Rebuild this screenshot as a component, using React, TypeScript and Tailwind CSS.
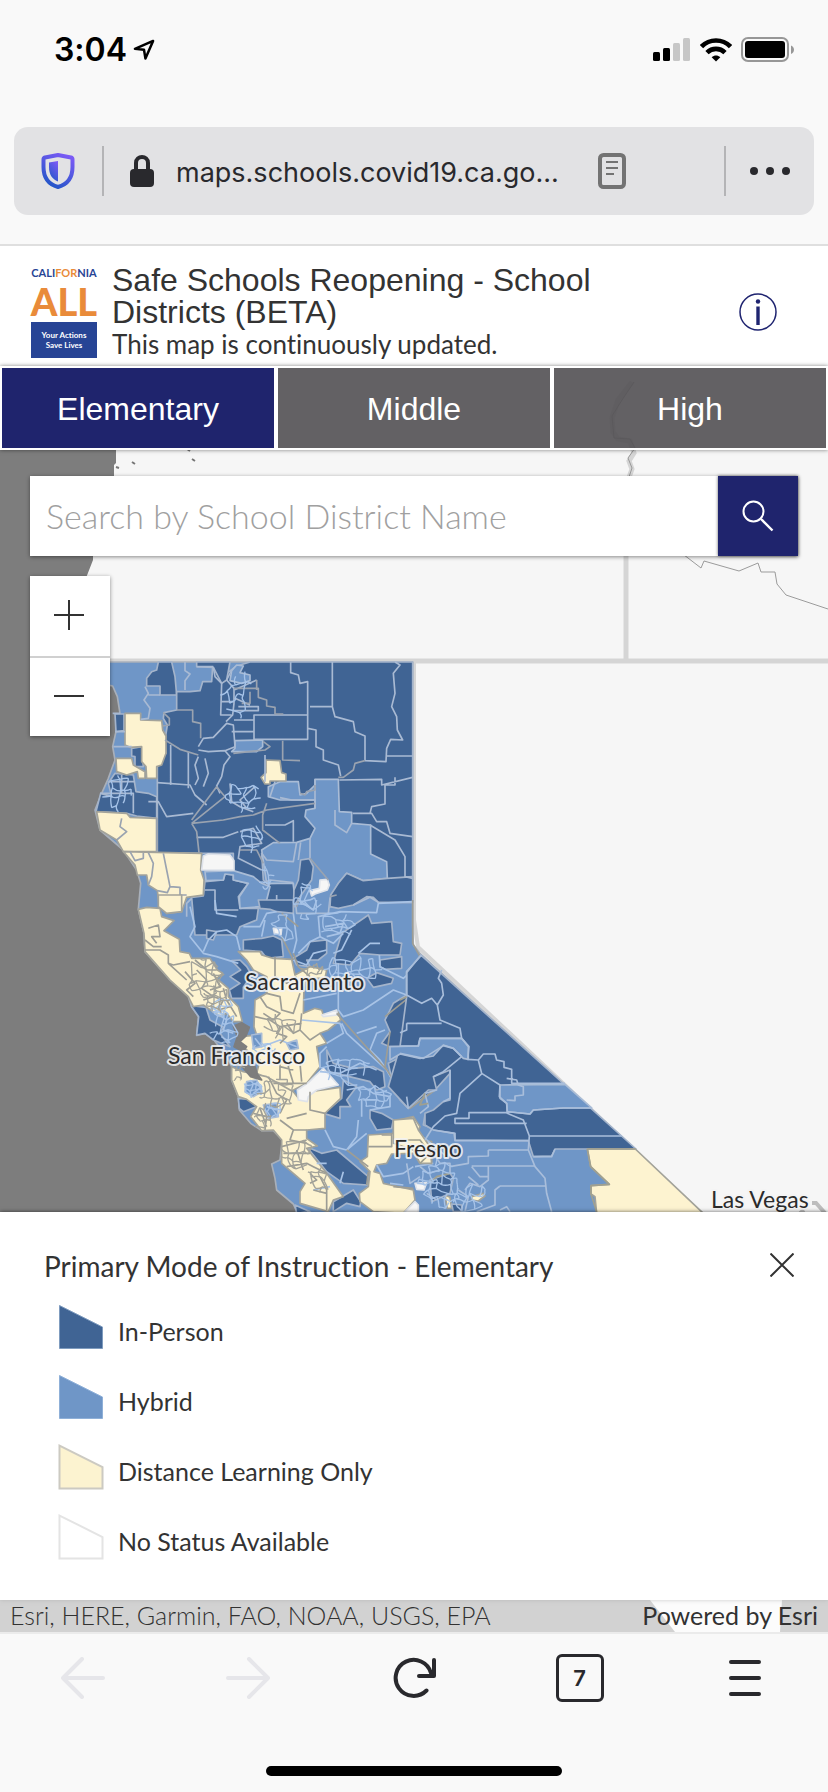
import { useState } from "react";
import type { ReactNode } from "react";

const DARK = "#406494";
const MID = "#6f96c7";
const PALE = "#fdf3d0";
const BLANK = "#f6f6f6";
const WATER = "#7d7d7d";

type Region = { fill: string; points: string[] };

/* District areas. Map units are a third of a pixel, origin at (80, 650). */
const north: Region[] = [
  {
    fill: DARK,
    points: [
      "235,36 275,36 285,80 290,135 240,135 240,108 200,108 200,85 215,65 230,60",
      "290,125 330,125 360,122 368,95 395,95 398,50 420,60 440,70 470,48 510,36 998,36 998,757 895,757 880,742 860,740 820,765 750,770 755,740 780,700 660,630 545,610 550,690 570,710 540,770 480,775 470,670 460,660 460,610 365,610 232,608 232,345 258,310 255,270 262,225 250,205 252,188 290,180",
      "350,36 450,36 440,90 425,100 400,52 350,50",
      "105,192 132,192 132,242 108,245",
      "155,295 185,290 190,350 165,350 165,320 155,318",
      "105,370 160,375 168,425 205,430 230,440 230,505 170,498 140,490 48,485 62,430 95,440 85,400",
      "335,742 370,738 375,695 430,690 435,672 460,675 460,690 505,700 475,740 480,775 535,775 530,810 480,830 470,855 345,855",
      "570,700 640,698 645,770 540,775 545,750",
    ],
  },
  {
    fill: MID,
    points: [
      "455,62 470,45 490,48 480,68 510,75 510,92 485,100 450,92",
      "465,272 548,270 548,290 530,305 455,305 465,295",
      "565,410 600,395 655,395 660,435 680,430 705,405 705,388 775,388 778,485 815,487 815,520 872,525 872,612 920,635 922,685 850,692 800,670 775,700 750,745 745,790 650,790 640,700 560,700 545,600 580,578 650,577 690,565 705,535 675,500 678,480 705,475 705,450 600,450 565,440",
      "375,665 460,662 520,680 545,700 570,710 560,750 540,770 480,775 478,740 505,700 460,690 460,675 435,672 430,690 378,692",
    ],
  },
  {
    fill: DARK,
    points: [
      "662,630 688,626 700,650 695,690 660,740 640,770 642,720 655,690",
      "775,700 800,670 850,692 922,685 998,680 998,757 895,757 880,742 860,740 820,765 775,775 750,770 752,735",
    ],
  },
  {
    fill: PALE,
    points: [
      "135,190 182,190 182,210 245,212 248,240 258,258 258,310 245,345 230,350 230,385 200,385 198,350 185,335 185,290 150,292 135,285",
      "108,325 155,325 160,345 195,365 195,385 175,385 172,365 140,375 110,365",
      "50,485 140,490 150,502 230,505 230,605 130,605 110,570 60,540",
      "130,605 365,610 362,660 372,690 370,735 320,742 305,785 260,790 238,770 232,722 205,705 200,675 172,675 165,645",
      "558,330 600,332 605,368 618,372 618,393 570,393 570,402 555,402 543,382 558,368",
    ],
  },
  {
    fill: BLANK,
    points: [
      "370,618 385,612 450,615 462,632 462,660 365,660",
      "720,690 742,688 748,705 742,720 705,732 695,738 690,722 718,715",
    ],
  },
];

/* Second sheet, origin at (80, 900). */
const central: Region[] = [
  {
    fill: DARK,
    points: [
      "535,0 640,0 640,40 590,35 570,28 540,25",
      "490,120 545,115 580,108 605,120 610,170 560,175 545,155 490,150",
      "455,182 480,180 500,200 515,225 490,262 490,295 455,295 448,270 480,250 450,230 482,210",
      "330,292 342,318 378,322 390,360 430,382 420,400 450,440 400,420 375,400 350,405 356,350 335,320",
      "380,90 410,95 400,120 380,115",
      "680,150 690,125 740,120 740,160 715,180 680,180 690,200 650,195 640,175",
      "785,100 865,45 875,70 935,65 940,125 965,130 960,165 900,165 840,160 810,195 760,190 770,150",
      "900,180 965,170 965,205 915,208 900,200",
      "860,235 890,218 940,235 935,250 880,262",
      "980,215 1025,168 1115,250 1400,520 1145,475 1145,415 1015,415 1010,440 930,440 905,430 930,395 915,360 940,310 980,285",
      "925,490 980,462 1035,478 1090,438 1150,475 1110,520 1065,570 985,625 960,600 940,560",
      "740,450 760,490 820,505 880,500 910,515 915,560 890,570 870,545 830,535 745,515",
      "790,540 830,560 800,600 812,620 780,620 780,655 730,640 785,595",
      "870,630 905,640 940,660 935,685 890,690 870,655",
      "1035,645 1060,640 1110,605 1110,690 1070,690 1030,675",
      "475,595 525,600 530,620 490,635 478,625",
      "680,740 725,760 770,750 865,830 862,855 790,850 740,815 720,790",
      "760,905 820,870 842,905 840,920 800,910 760,935",
      "645,915 690,935 650,940",
    ],
  },
  {
    fill: PALE,
    points: [
      "175,28 200,22 240,25 245,50 282,62 252,92 298,118 300,155 328,160 335,175 390,175 412,210 428,220 410,235 445,265 445,290 475,320 487,365 460,365 440,340 420,350 370,315 340,320 325,290 270,240 195,155 192,100",
      "235,-15 305,-15 305,35 260,40 235,20",
      "475,155 540,155 545,165 580,175 635,178 645,225 690,200 740,210 735,235 680,235 672,262 670,340 705,325 725,330 730,345 775,335 782,360 745,390 720,400 740,430 710,440 720,500 680,550 630,575 600,560 560,535 530,520 540,480 500,450 480,430 480,410 530,405 522,380 525,300 560,280 560,230 520,210 500,180",
      "455,500 490,515 560,530 640,575 660,600 690,575 780,562 782,595 735,640 735,685 680,690 680,715 712,738 680,745 740,820 790,890 760,900 745,935 660,910 660,875 675,850 640,820 605,790 605,720 580,690 545,692 512,650 530,620 500,598 475,590 455,540",
      "955,660 1000,650 1020,680 1005,715 1055,725 1055,790 1020,790 1000,760 935,762 920,790 890,795 882,815 900,820 910,850 1000,870 1005,900 970,940 880,935 840,905 838,880 865,860 870,815 840,785 862,770 865,705 940,700 945,670",
    ],
  },
  {
    fill: BLANK,
    points: [
      "705,528 730,505 775,555 710,570 685,590 682,605 655,600 652,570 685,548",
      "580,85 605,85 603,105 583,100",
      "725,345 770,330 772,345 730,350",
      "1005,850 1040,848 1032,870 1010,868",
      "970,940 1005,905 1015,915 1015,940",
    ],
  },
  {
    fill: MID,
    points: [
      "500,545 530,540 545,575 520,590 495,575",
      "550,615 590,610 595,650 565,655",
      "515,405 545,400 545,440 520,445",
      "620,430 650,420 655,445 630,450",
    ],
  },
  {
    fill: WATER,
    points: [
      "460,378 485,368 508,382 498,408 480,425 500,440 490,455 462,440 472,410",
      "482,495 525,500 532,522 545,540 512,530",
    ],
  },
];

/* Eastern sheet, origin at (400, 900). */
const east: Region[] = [
  {
    fill: DARK,
    points: [
      "20,218 62,165 708,747 465,747 455,768 400,770 385,722 165,720 162,700 100,690 75,675 75,640 100,630 130,605 150,600 150,510 100,530 110,570 85,570 25,625 -35,560 0,440 20,290",
    ],
  },
  {
    fill: MID,
    points: [
      "-30,440 55,438 60,415 185,415 205,440 205,478 190,475 160,445 130,435 100,468 60,475 0,462 -30,480",
      "300,555 495,553 575,624 490,624 400,630 390,642 322,635 320,610 300,595",
    ],
  },
  {
    fill: PALE,
    points: [
      "562,747 706,747 910,940 590,940 585,890 573,882 573,857 628,853 572,800",
      "215,890 250,880 255,888 235,903 215,900",
      "135,885 150,892 155,925 142,925",
      "-20,660 40,655 55,690 90,740 95,790 60,790 40,750 -20,730",
    ],
  },
  {
    fill: DARK,
    points: ["90,840 150,820 160,835 150,880 95,905", "155,912 185,915 185,935 160,935"],
  },
];

type Stroke = { color: string; d: string };

const northLines: Stroke[] = [
  {
    color: "#a9bad3",
    d: "M315 36V62L330 72L315 92V120M350 50H400M400 52L405 80L425 100L422 195H455M455 60L440 90L462 115V160L458 195L438 215M422 155H460M462 120L530 90M465 145L510 165M462 182H535V170H475M462 210H520M455 245H522M522 270V195H683M632 36V68L655 75L660 100L683 95V268H522M757 36V170H690M757 100V170L765 200L820 215L825 245L855 258V330M945 36L960 45L940 70L945 130L935 170L950 200L952 240L968 270L932 268L920 295L918 335L855 332M683 235L708 240V290L730 300V330L775 345L782 378M920 318H998M272 285V405M325 305V415M355 320L345 345L355 385L345 405M375 325L385 370L370 410M232 398L330 405L345 435L380 465M205 455L235 455L260 500L340 490M355 290L370 265L400 262L440 220L460 225L465 290L435 302L385 305L355 300M435 302L450 320L432 345L425 380L410 408L420 430M450 400L455 455L480 470L520 485M525 410L480 450L500 475M555 315V395M350 562H430L475 545M555 525L615 525L640 512V575M705 450H635L600 443M705 388V475M778 390L905 388V405L998 382M945 382V405H915V462L875 470L870 490M870 525L945 570L975 620V680L998 685M818 490H875L890 515L920 515L930 550L998 560M765 480V525L800 548L815 520M545 610L560 630L640 635L650 577M690 565L690 625M655 630L662 577M590 735V770L640 775M480 545L520 535L545 580L480 590L475 625L545 660M550 700L570 690L640 698M375 720H405V780H475M335 745L320 760V800M60 430H160V490M85 395H165M125 375V430M100 290H155M105 245H135M120 190H98M195 110L205 130L192 150L210 175L205 205L182 208M240 135H205M585 395L570 440M820 765L870 742L895 757",
  },
  {
    color: "#9aa3b0",
    d: "M290 180H338V215L362 220V265M250 188L268 205V225L248 228M255 270L300 298L355 315M462 115H535V142L560 150V168L585 172V192H610M530 90V120M510 125V160H485M460 310L555 300L570 290L550 275M608 272V330L660 332M335 520L435 440L410 410L335 510M335 520L430 510L480 500L520 495L560 480L705 460M335 520L350 545L357 608M775 382H790L820 360L825 340L855 332M705 405V420L680 425L675 435L660 430M560 460L548 495V540L600 580M480 600L530 600L550 640M690 625L745 690M150 605L165 632L190 625V608M205 608L220 640L215 680L205 705M250 610L260 660L270 710L300 712V735H320M232 722L262 728L270 710M125 505L120 530L140 545L110 570M660 740L650 770M750 740L770 735M230 605V505",
  },
];

const centralLines: Stroke[] = [
  {
    color: "#a8c3e6",
    d: "M330 20L345 80L330 110L370 160L410 170L475 190M405 0L410 40L470 50M370 155L385 120L410 95L440 90L470 110L480 150M490 80H540L560 40L590 35M545 110L555 60M640 40L650 120L640 160M655 160L690 125L720 110L715 50L780 35L890 38L895 10L998 5M735 80L790 70L780 100L740 110M720 110L760 130L790 100M815 90L785 150L760 160M835 160L870 130L900 130M898 165L900 200L970 235L1010 200M775 190V330L790 350L850 330L940 270L980 285M670 300L770 280M665 360L780 370L790 400L740 430M785 370L800 400L920 510L900 480L870 450L890 400L915 390M830 400L890 380M920 510L985 625M720 515L780 520L840 490L890 510M800 570L850 560L880 580L930 590L930 620L870 630M850 600L890 600M835 660L830 710L800 750M735 690L760 740L800 750L860 700M890 795L910 830L970 820L1000 800M930 850L970 855M710 790L740 790M790 815L780 850M700 870L750 860M525 415L545 440L600 420L650 440M410 340L440 360L430 390L460 400M520 550L545 560L520 580M560 620L590 630M720 505V460L740 440M655 0L700 30L710 0M640 180L680 195L700 160L740 150M1000 690L1040 720L1100 770M1005 800L1060 790M845 650V600",
  },
  {
    color: "#9d9d95",
    d: "M195 150H240L265 165V190L280 195L330 185M195 120L220 140L245 140M205 85L235 75L240 110L215 110L230 130M265 190L320 240M315 215L345 250L320 270L340 290M350 210L380 240L365 265L400 290L370 300M345 180L380 210L410 210M400 220L420 260L390 270M430 265L440 300L470 350M400 290L430 300L415 330L450 320M560 230V280L600 290L605 330L640 340L660 280M585 170V230L620 250L650 230M540 290L560 320L600 340L580 360L550 340M525 350L570 360L600 380L665 370M600 380L590 400L620 410L600 430M665 340L660 390L690 420L720 400M620 370L640 400L660 390M560 450L600 460V540M640 460L625 500L640 550M600 500L640 510M660 490L665 545M580 550H680M565 530L590 580L620 600L600 640M690 575L690 630L735 640M620 655L680 640M600 660L640 690L680 690M640 690L630 720L680 730M605 740L680 720M610 760L690 760M620 800L680 790L700 800L740 820M650 750L670 810M690 820L710 840L690 850M720 830L740 870L740 930M700 870L740 880M540 625L560 680M520 640L560 650L555 690M935 700V740H865M905 705H935M940 860L1000 865M860 855L865 815M800 750L865 800M915 350L990 290M930 395L915 500L990 625L1065 570M770 340L920 510M640 160L655 200L690 230M655 80L605 40M605 110L640 180M998 0V130L1020 170",
  },
];

const eastLines: Stroke[] = [
  {
    color: "#a9bedb",
    d: "M65 165L20 215V285L65 310L95 295L112 315L130 285L125 250L115 235L125 210M112 315L120 360L180 385L185 415L207 440L203 478L235 480L245 520L300 555L298 590L320 610L322 640L370 660L388 708L385 750L405 800L435 835L440 880L455 935M235 480L250 462H285L290 480L312 485V502L335 508L335 550H495M320 535L350 540L355 555L370 560V585L345 588V602L320 600M322 635L390 642L400 630L490 624H575M388 708H665M385 722H165V700L100 690M320 638H207V655H165V670H380M75 720L100 680L135 648L170 640L180 580L245 522M185 470L130 515L100 530M150 510V595L130 605M20 370H125M0 398L20 390V370M0 438H55L60 415H185M0 460L70 475L130 437L160 445L185 470M215 798H405M400 770H455L465 747M265 750H385M265 750V768L205 770V790L150 800M300 858H440M300 858L285 870V915L230 935M215 800L240 830L265 830M265 800V840L240 860L210 850L195 870M100 760L120 790L150 790V820M60 800L85 820L120 810M20 790L30 850L60 830M205 830L235 855M80 880L110 900M175 870L205 890L195 935M300 930L320 920L330 935M60 640L85 620L75 580L110 570M20 590L25 625",
  },
  {
    color: "#a0a08f",
    d: "M562 747H706M562 747L572 800L628 853L573 857V882L590 935M0 300L20 290M75 580L60 615L85 610M0 720H60L90 760L60 790M90 850L110 830L150 820",
  },
];

/* A field of small irregular cells for the crowded metropolitan areas. */
function cells(cx: number, cy: number, rx: number, ry: number, step: number, seed: number) {
  let s = seed;
  const rnd = () => {
    s = (s * 16807) % 2147483647;
    return s / 2147483647;
  };
  const cols = Math.ceil((rx * 2) / step);
  const rows = Math.ceil((ry * 2) / step);
  const grid: number[][][] = [];
  for (let r = 0; r <= rows; r++) {
    grid.push([]);
    for (let c = 0; c <= cols; c++) {
      grid[r].push([
        Math.round(cx - rx + c * step + (rnd() - 0.5) * step * 0.9),
        Math.round(cy - ry + r * step + (rnd() - 0.5) * step * 0.9),
      ]);
    }
  }
  const inside = (p: number[]) => ((p[0] - cx) / rx) ** 2 + ((p[1] - cy) / ry) ** 2 < 1;
  let d = "";
  const link = (a: number[], b: number[]) => {
    if (!inside(a) || !inside(b) || rnd() < 0.15) return;
    const mx = Math.round((a[0] + b[0]) / 2 + (rnd() - 0.5) * step * 0.6);
    const my = Math.round((a[1] + b[1]) / 2 + (rnd() - 0.5) * step * 0.6);
    d += `M${a[0]} ${a[1]}Q${mx} ${my} ${b[0]} ${b[1]}`;
  };
  for (let r = 0; r <= rows; r++) {
    for (let c = 0; c <= cols; c++) {
      if (c < cols) link(grid[r][c], grid[r][c + 1]);
      if (r < rows) link(grid[r][c], grid[r + 1][c]);
    }
  }
  return d;
}

const lightCells = [
  cells(490, 440, 55, 50, 21, 11),
  cells(515, 570, 45, 45, 22, 23),
  cells(470, 130, 50, 80, 26, 5),
  cells(115, 430, 50, 60, 24, 31),
  cells(555, 685, 30, 40, 18, 8),
  cells(680, 755, 45, 60, 24, 91),
  cells(770, 825, 60, 40, 22, 17),
  cells(820, 955, 90, 45, 22, 71),
  cells(430, 1130, 45, 65, 20, 43),
  cells(800, 1260, 80, 50, 22, 39),
  cells(890, 1335, 70, 45, 22, 55),
  cells(520, 1315, 35, 30, 16, 77),
  cells(580, 1380, 30, 30, 16, 19),
  cells(545, 1190, 45, 25, 18, 37),
  cells(1080, 1600, 70, 80, 21, 29),
  cells(1170, 1640, 60, 50, 22, 83),
  cells(610, 840, 40, 50, 24, 67),
  cells(425, 1070, 35, 30, 16, 3),
];
const greyCells = [
  cells(370, 990, 65, 70, 24, 13),
  cells(410, 1045, 45, 45, 18, 59),
  cells(590, 1330, 60, 50, 21, 47),
  cells(550, 1400, 35, 42, 19, 7),
  cells(650, 1510, 50, 55, 24, 61),
  cells(600, 1130, 55, 40, 24, 21),
  cells(700, 960, 40, 22, 17, 73),
  cells(480, 1270, 25, 35, 15, 97),
  cells(715, 1590, 40, 45, 22, 99),
];

const edges: Record<string, string> = {
  [DARK]: "#a4b4cb",
  [MID]: "#a9bcd6",
  [PALE]: "#a3a39a",
  [BLANK]: "#dfe3ea",
  [WATER]: WATER,
};

function Sheet({ regions, lines, at }: { regions: Region[]; lines: Stroke[]; at: string }) {
  return (
    <g transform={at}>
      {regions.map((r, i) =>
        r.points.map((p, j) => <polygon key={`${i}-${j}`} points={p} fill={r.fill} stroke={edges[r.fill]} />),
      )}
      {lines.map((l) => (
        <path key={l.color} d={l.d} fill="none" stroke={l.color} />
      ))}
    </g>
  );
}

const cities = [
  { name: "Sacramento", x: 245, y: 990 },
  { name: "San Francisco", x: 168, y: 1064 },
  { name: "Fresno", x: 394, y: 1157 },
  { name: "Las Vegas", x: 711, y: 1208 },
];

function DistrictMap() {
  return (
    <svg
      className="absolute inset-0 h-full w-full"
      viewBox="0 366 828 1266"
      preserveAspectRatio="xMidYMin slice"
      role="img"
      aria-label="Map of California school districts"
    >
      <rect y="366" width="828" height="1266" fill={WATER} />
      <rect y="366" width="828" height="16" fill="#fff" />
      <path d="M116 382V463L114 465V478L93 550V560L86 578L84 660H130L320 1214L650 1600L675 1632H780L782 1600H828V382Z" fill="#f6f6f6" />
      <path d="M187 449l3 2M192 459l3 2M132 462l3 2M116 467l3 1" stroke="#777" strokeWidth="2" />
      <g fill="none" stroke="#d5d5d5">
        <path d="M100 661H828M626 540V661" strokeWidth="5" />
        <path d="M632 382l-14 18-6 18 1 14 5 7 12 2 4 12-5 8 3 8-5 14" strokeWidth="5" />
        <path d="M634 382l-12 18-10 16 2 22 16 1 5 9-7 10 4 10-4 12" stroke="#999" strokeWidth="1" />
        <path d="M414 661V920L418 947L702 1214" strokeWidth="4" />
      </g>
      <path d="M675 548L701 568L704 561L739 571L758 563L761 572H775L777 584L786 595L828 609" fill="none" stroke="#9b9b9b" strokeWidth="1" />
      <path d="M812 1203h4l9 10M800 1213l4-3" fill="none" stroke="#bdbdbd" strokeWidth="4" />

      <g transform="translate(80 650) scale(.33333)" strokeWidth="5" strokeLinejoin="round">
        <path
          d="M60 36H998V825L1000 885L1020 910L1870 1695H655L640 1662L590 1620L585 1585L575 1542L600 1530L607 1470L580 1442L545 1442L512 1420L478 1380L475 1340L455 1290V1250L440 1220L400 1168L375 1150L350 1156L356 1100L335 1070L325 1040L270 990L195 905L192 850L175 778L182 700L170 660L130 600L60 540L45 480L65 430L85 385L105 330L98 290L120 190L112 140L98 108L60 100Z"
          fill={MID}
          stroke="#a9b0ba"
        />
        <Sheet at="translate(0 0)" regions={north} lines={northLines} />
        <Sheet at="translate(0 750)" regions={central} lines={centralLines} />
        <Sheet at="translate(960 750)" regions={east} lines={eastLines} />
        <path d={lightCells.join("")} fill="none" stroke="#a6c3e8" strokeWidth="4" />
        <path d={greyCells.join("")} fill="none" stroke="#a3a39a" strokeWidth="4" />
      </g>

      <g
        className="text-[23px]"
        fontFamily="Lato, sans-serif"
        fill="#2b2b2b"
        stroke="#f4f4f4"
        strokeOpacity="0.85"
        strokeWidth="4"
        strokeLinejoin="round"
        paintOrder="stroke"
      >
        {cities.map((c) => (
          <text key={c.name} x={c.x} y={c.y}>
            {c.name}
          </text>
        ))}
      </g>
    </svg>
  );
}

function StatusBar() {
  return (
    <div className="flex h-[100px] items-center justify-between pr-[33px] pl-[54px]">
      <div className="flex items-center gap-[6px]">
        <span className="text-[32px] leading-none font-semibold text-black">3:04</span>
        <svg width="22" height="22" viewBox="0 0 23 23" fill="none" stroke="#000" strokeWidth="2.6" strokeLinejoin="round" aria-hidden="true">
          <path d="M21 2L2 10.3L11.5 11.3L13 20.5Z" />
        </svg>
      </div>
      <div className="flex items-center gap-[9px]">
        <svg width="38" height="24" viewBox="0 0 38 24" aria-hidden="true">
          <rect x="0" y="14" width="7" height="9" rx="1.5" />
          <rect x="10" y="10" width="7" height="13" rx="1.5" />
          <rect x="20" y="5" width="7" height="18" rx="1.5" fill="#c7c7c7" />
          <rect x="30" y="0" width="7" height="23" rx="1.5" fill="#c7c7c7" />
        </svg>
        <svg width="32" height="24" viewBox="0 0 32 24" fill="none" stroke="#000" strokeWidth="4.6" aria-hidden="true">
          <path d="M1.5 8.6C9.5 .4 22.5 .4 30.5 8.6" />
          <path d="M7 14.6C12 9.6 20 9.6 25 14.6" />
          <path d="M16 23.5L11.7 19.2C14.2 16.9 17.8 16.9 20.3 19.2Z" fill="#000" stroke="none" />
        </svg>
        <svg width="54" height="26" viewBox="0 0 54 26" aria-hidden="true">
          <rect x="1" y="1" width="46" height="23" rx="6" fill="none" stroke="#979797" strokeWidth="2" />
          <rect x="4" y="4" width="40" height="17" rx="3" />
          <path d="M50 8.5C54 10 54 15.5 50 17Z" fill="#979797" />
        </svg>
      </div>
    </div>
  );
}

function AddressBar() {
  return (
    <div className="mx-[14px] mt-[27px] flex h-[88px] items-center rounded-[14px] bg-[#e2e2e4] pl-[27px]">
      <button type="button" aria-label="Tracking protection">
        <svg width="34" height="36" viewBox="0 0 34 36" aria-hidden="true">
          <defs>
            <linearGradient id="shield" x1="0.8" y1="0" x2="0.3" y2="1">
              <stop offset="0" stopColor="#7a5af5" />
              <stop offset="1" stopColor="#2456c8" />
            </linearGradient>
          </defs>
          <path d="M17 2L30 4.5Q31.5 5 31.5 6.5V14C31.5 25 26 31.5 17 34C8 31.5 2.5 25 2.5 14V6.5Q2.5 5 4 4.5Z" fill="none" stroke="url(#shield)" strokeWidth="4" strokeLinejoin="round" />
          <path d="M17 8L8 9.5V14C8 21.5 11 26 17 28.5Z" fill="url(#shield)" />
        </svg>
      </button>
      <span className="ml-[27px] h-[50px] w-[2px] bg-[#b4b4b6]" />
      <svg className="ml-[26px]" width="24" height="32" viewBox="0 0 24 32" aria-hidden="true">
        <rect x="0" y="14" width="24" height="18" rx="4" fill="#29292d" />
        <path d="M6 15V8C6 0 18 0 18 8V15" fill="none" stroke="#29292d" strokeWidth="4" />
      </svg>
      <span className="ml-[22px] pt-[4px] text-[27px] text-[#29292d]">maps.schools.covid19.ca.go...</span>
      <button type="button" aria-label="Reader view" className="ml-auto">
        <svg width="28" height="36" viewBox="0 0 28 36" fill="none" stroke="#737373" aria-hidden="true">
          <rect x="2" y="2" width="24" height="32" rx="3.5" strokeWidth="4" />
          <path d="M8 9H20M8 15H20M8 21H16" strokeWidth="2" />
        </svg>
      </button>
      <span className="ml-[98px] h-[50px] w-[2px] bg-[#b4b4b6]" />
      <button type="button" aria-label="Page options" className="mr-[24px] ml-[24px]">
        <svg width="40" height="8" viewBox="0 0 40 8" fill="#29292d" aria-hidden="true">
          <circle cx="4" cy="4" r="4" />
          <circle cx="20" cy="4" r="4" />
          <circle cx="36" cy="4" r="4" />
        </svg>
      </button>
    </div>
  );
}

function Logo() {
  return (
    <div className="flex w-[66px] shrink-0 flex-col items-center font-[Lato,sans-serif]">
      <div className="flex text-[11px] leading-[14px] font-bold whitespace-nowrap text-[#274495]">
        <span>CALI</span>
        <span className="text-[#e98b3a]">FOR</span>
        <span>NIA</span>
      </div>
      <div className="text-[38px] leading-[42px] font-black text-[#e98b3a]">ALL</div>
      <div className="flex h-[36px] w-full flex-col items-center justify-center bg-[#274495] text-[8px] leading-[10px] font-bold whitespace-nowrap text-white">
        <span>Your Actions</span>
        <span>Save Lives</span>
      </div>
    </div>
  );
}

const levels = ["Elementary", "Middle", "High"];

const legend = [
  { label: "In-Person", fill: DARK, edge: "#7f9cbf", width: 1 },
  { label: "Hybrid", fill: MID, edge: "#8fb0d8", width: 1 },
  { label: "Distance Learning Only", fill: "#fcf3d0", edge: "#cccac2", width: 2 },
  { label: "No Status Available", fill: "#fff", edge: "#e4e4e4", width: 2 },
];

function ToolButton({ label, children }: { label: string; children: ReactNode }) {
  return (
    <button type="button" aria-label={label} className="flex h-[48px] items-center justify-center">
      {children}
    </button>
  );
}

export default function App() {
  const [level, setLevel] = useState("Elementary");
  const [open, setOpen] = useState(true);

  return (
    <div className="flex min-h-screen flex-col bg-[#f9f9f9] font-[Inter,sans-serif] [font-variant-ligatures:none]">
      <StatusBar />
      <AddressBar />

      <header className="mt-[29px] flex h-[122px] items-center border-t-2 border-[#dfdfdf] bg-white pt-[12px] pr-[51px] pl-[31px]">
        <Logo />
        <div className="ml-[15px] text-[#333]">
          <h1 className="max-w-[520px] font-['Liberation_Sans',Arial,sans-serif] text-[32px] leading-[32px]">
            Safe Schools Reopening - School Districts (BETA)
          </h1>
          <p className="font-[Lato,sans-serif] text-[26px] leading-[32px]">This map is continuously updated.</p>
        </div>
        <button type="button" aria-label="About this map" className="ml-auto">
          <svg width="38" height="38" viewBox="0 0 38 38" aria-hidden="true">
            <circle cx="19" cy="19" r="18" fill="none" stroke="#1f2470" strokeWidth="1.5" />
            <circle cx="19" cy="8.5" r="2.2" fill="#1f2470" />
            <rect x="17.3" y="13.5" width="3.4" height="18.5" fill="#1f2470" />
          </svg>
        </button>
      </header>

      <main className="relative flex flex-1 flex-col">
        <DistrictMap />

        <nav className="relative grid grid-cols-3 shadow-[0_0_4px_rgba(0,0,0,0.5)]" aria-label="School level">
          {levels.map((name) => (
            <button
              key={name}
              type="button"
              aria-pressed={level === name}
              onClick={() => setLevel(name)}
              className={
                level === name
                  ? "h-[84px] border-2 border-white bg-[#1f246d] pt-[2px] font-['Liberation_Sans',Arial,sans-serif] text-[32px] text-white"
                  : "h-[84px] border-2 border-white bg-[#565457]/92 bg-clip-padding pt-[2px] font-['Liberation_Sans',Arial,sans-serif] text-[32px] text-white"
              }
            >
              {name}
            </button>
          ))}
        </nav>

        <form className="relative mx-[30px] mt-[26px] flex h-[80px] shadow-[0_1px_4px_rgba(0,0,0,0.45)]" onSubmit={(e) => e.preventDefault()}>
          <input
            type="text"
            aria-label="Search by School District Name"
            placeholder="Search by School District Name"
            className="min-w-0 flex-1 bg-white px-4 pb-[2px] font-[Lato,sans-serif] text-[34px] font-light text-[#333] outline-none placeholder:text-[#a0a0a0]"
          />
          <button type="submit" aria-label="Search" className="flex w-[80px] items-center justify-center bg-[#1f246d] shadow-[0_0_3px_rgba(0,0,0,0.6)]">
            <svg width="32" height="32" viewBox="0 0 32 32" fill="none" stroke="#fff" strokeWidth="2" aria-hidden="true">
              <circle cx="11.5" cy="11.5" r="10" />
              <path d="M19 19L30.5 30.5" strokeWidth="2.4" />
            </svg>
          </button>
        </form>

        <div className="relative mt-5 ml-[30px] flex w-[80px] flex-col bg-white shadow-[0_1px_4px_rgba(0,0,0,0.45)]">
          <button type="button" aria-label="Zoom in" className="flex h-[80px] items-center justify-center">
            <svg width="32" height="32" viewBox="0 0 32 32" stroke="#323232" strokeWidth="2" aria-hidden="true">
              <path d="M0 15H30M15 0V30" />
            </svg>
          </button>
          <button type="button" aria-label="Zoom out" className="flex h-[80px] items-center justify-center border-t-2 border-[#d0d0d0]">
            <svg width="32" height="32" viewBox="0 0 32 32" stroke="#323232" strokeWidth="2" aria-hidden="true">
              <path d="M0 15H30" />
            </svg>
          </button>
        </div>

        <div className="relative mt-auto">
          {open && (
            <section className="bg-white pt-[34px] pb-[28px] shadow-[0_0_4px_rgba(0,0,0,0.6)]" aria-label="Legend">
              <div className="flex h-[38px] items-center justify-between pr-[34px] pl-[44px]">
                <h2 className="pt-[2px] font-[Lato,sans-serif] text-[28px] text-[#333]">Primary Mode of Instruction - {level}</h2>
                <button type="button" aria-label="Close legend" onClick={() => setOpen(false)}>
                  <svg width="24" height="24" viewBox="0 0 24 24" stroke="#323232" strokeWidth="2" aria-hidden="true">
                    <path d="M.5 .5L23.5 23.5M23.5 .5L.5 23.5" />
                  </svg>
                </button>
              </div>
              <ul className="mt-[8px]">
                {legend.map((item) => (
                  <li key={item.label} className="flex h-[70px] items-center gap-[13px] pl-[57px]">
                    <svg width="48" height="48" viewBox="0 0 48 48" aria-hidden="true">
                      <path d="M2.5 2.5V45.5H45.5V24Z" fill={item.fill} stroke={item.edge} strokeWidth={item.width} />
                    </svg>
                    <span className="pt-[10px] font-[Lato,sans-serif] text-[25px] text-[#333]">{item.label}</span>
                  </li>
                ))}
              </ul>
            </section>
          )}
          <footer className="flex h-[32px] items-center justify-between bg-white/65 px-[10px] font-[Lato,sans-serif] text-[25px] text-[#323232]">
            <span className="font-light">Esri, HERE, Garmin, FAO, NOAA, USGS, EPA</span>
            <span>
              Powered by <a href="#esri">Esri</a>
            </span>
          </footer>
        </div>
      </main>

      <div className="flex h-[160px] flex-col justify-between border-t-2 border-[#ebebeb] pt-[20px] pb-[16px]">
        <div className="grid grid-cols-5">
          <ToolButton label="Back">
            <svg width="44" height="42" viewBox="0 0 44 42" fill="none" stroke="#e6e6ea" strokeWidth="4" strokeLinecap="round" strokeLinejoin="round" aria-hidden="true">
              <path d="M42 21H3M21 2L2 21L21 40" />
            </svg>
          </ToolButton>
          <ToolButton label="Forward">
            <svg width="44" height="42" viewBox="0 0 44 42" fill="none" stroke="#e6e6ea" strokeWidth="4" strokeLinecap="round" strokeLinejoin="round" aria-hidden="true">
              <path d="M2 21H41M23 2L42 21L23 40" />
            </svg>
          </ToolButton>
          <ToolButton label="Reload">
            <svg width="44" height="42" viewBox="0 0 44 42" fill="none" stroke="#29292d" strokeWidth="4" strokeLinecap="round" strokeLinejoin="round" aria-hidden="true">
              <path d="M34.5 33.5A18 18 0 1 1 39 16M42 3V19H27" />
            </svg>
          </ToolButton>
          <ToolButton label="Open tabs">
            <span className="flex h-[48px] w-[48px] items-center justify-center rounded-[6px] border-3 border-[#29292d] text-[22px] font-semibold text-[#29292d]">
              7
            </span>
          </ToolButton>
          <ToolButton label="Menu">
            <svg width="32" height="36" viewBox="0 0 32 36" stroke="#29292d" strokeWidth="4" strokeLinecap="round" aria-hidden="true">
              <path d="M2 2H30M2 18H30M2 34H30" />
            </svg>
          </ToolButton>
        </div>
        <div className="h-[10px] w-[296px] self-center rounded-full bg-black" />
      </div>
    </div>
  );
}
